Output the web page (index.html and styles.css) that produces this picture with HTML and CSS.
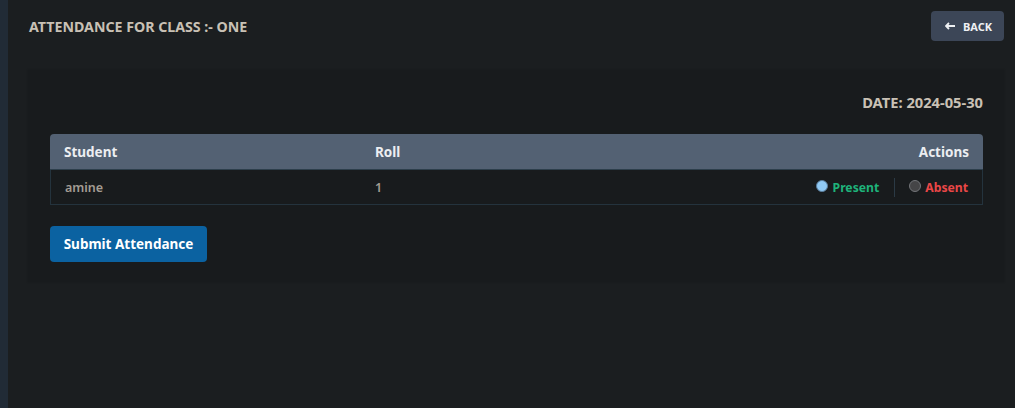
FILE: index.html
```html
<!DOCTYPE html>
<html>
<head>
<meta charset="utf-8">
<link rel="stylesheet" href="styles.css">
</head>
<body>
<div class="layout">
  <div class="sidebar"></div>
  <main class="main">
    <div class="topbar">
      <h1 class="title">ATTENDANCE FOR CLASS :- ONE</h1>
      <button class="back-btn"><svg class="arrow" width="10" height="8" viewBox="0 0 10 8"><path d="M10 4H2M4 1L1 4l3 3" fill="none" stroke="#eef0f3" stroke-width="1.8"/></svg>BACK</button>
    </div>
    <section class="card">
      <div class="date">DATE: 2024-05-30</div>
      <table class="table">
        <thead>
          <tr>
            <th class="col-student">Student</th>
            <th class="col-roll">Roll</th>
            <th class="col-actions">Actions</th>
          </tr>
        </thead>
        <tbody>
          <tr>
            <td class="col-student">amine</td>
            <td class="col-roll">1</td>
            <td class="col-actions">
              <div class="actions">
                <label class="opt present"><span class="radio checked"></span>Present</label>
                <span class="sep"></span>
                <label class="opt absent"><span class="radio"></span>Absent</label>
              </div>
            </td>
          </tr>
        </tbody>
      </table>
      <button class="submit-btn">Submit Attendance</button>
    </section>
  </main>
</div>
</body>
</html>
```
FILE: styles.css
```css
* { box-sizing: border-box; }
html, body {
  margin: 0;
  height: 100%;
  background: #1b1e20;
  font-family: "Noto Sans", "Open Sans", sans-serif;
}
.layout {
  display: flex;
  min-height: 408px;
}
.sidebar {
  width: 8px;
  background: #212b36;
  flex: none;
}
.main {
  flex: 1;
  padding: 11px 11px 0 20px;
}
.topbar {
  display: flex;
  justify-content: space-between;
  align-items: center;
  height: 30px;
}
.title {
  margin: 0 0 0 1px;
  font-size: 14.2px;
  font-weight: 700;
  color: #c9c1b5;
  letter-spacing: 0;
}
.back-btn {
  height: 30px;
  width: 73px;
  border: none;
  border-radius: 4px;
  background: #3c4657;
  color: #eef0f3;
  font-family: inherit;
  font-size: 11px;
  font-weight: 700;
  padding: 0 0 0 2px;
  display: flex;
  align-items: center;
  justify-content: center;
  gap: 8px;
}
.arrow { display: block; }
.card {
  margin-top: 29px;
  background: #181b1d;
  padding: 22px 21px 20px 22px;
  box-shadow: 0 0 2px rgba(0,0,0,0.2);
}
.date {
  text-align: right;
  font-size: 14.7px;
  font-weight: 700;
  color: #c9c1b5;
  line-height: 20px;
}
.table {
  margin-top: 22px;
  width: 100%;
  border-collapse: separate;
  border-spacing: 0;
}
.table th {
  background: #536173;
  color: #eceef1;
  font-size: 13.5px;
  font-weight: 700;
  height: 36px;
  text-align: left;
  padding: 0 14px;
  border-bottom: 1px solid #2d3f4c;
}
.table th:first-child { border-top-left-radius: 4px; }
.table th:last-child { border-top-right-radius: 4px; }
.table td {
  height: 35px;
  padding: 0 14px;
  font-size: 12.5px;
  font-weight: 600;
  color: #a39d93;
  border-bottom: 1px solid #24333d;
}
.table td:first-child { border-left: 1px solid #24333d; padding-left: 14px; }
.table td:last-child { border-right: 1px solid #24333d; }
.col-student { width: 311px; }
.table th.col-actions, .table td.col-actions { text-align: right; }
.actions {
  display: flex;
  justify-content: flex-end;
  align-items: center;
}
.opt {
  display: flex;
  align-items: center;
  gap: 5px;
  font-size: 12.2px;
  font-weight: 700;
}
.absent { gap: 4px; }
.present { color: #1eb37a; }
.absent { color: #ea4747; }
.radio {
  width: 12px;
  height: 12px;
  border-radius: 50%;
  background: #454547;
  border: 1px solid #727478;
  margin-top: -3px;
}
.radio.checked {
  background: #90c9f4;
  border: 1.5px solid #5a7d9c;
}
.sep {
  width: 1px;
  height: 19px;
  background: #2b3a45;
  margin: 0 14px 0 15px;
}
.submit-btn {
  margin-top: 21px;
  display: block;
  height: 36px;
  width: 157px;
  border: none;
  border-radius: 4px;
  background: #0b62a1;
  color: #ffffff;
  font-family: inherit;
  font-size: 13.5px;
  font-weight: 700;
  padding: 0;
}
```
